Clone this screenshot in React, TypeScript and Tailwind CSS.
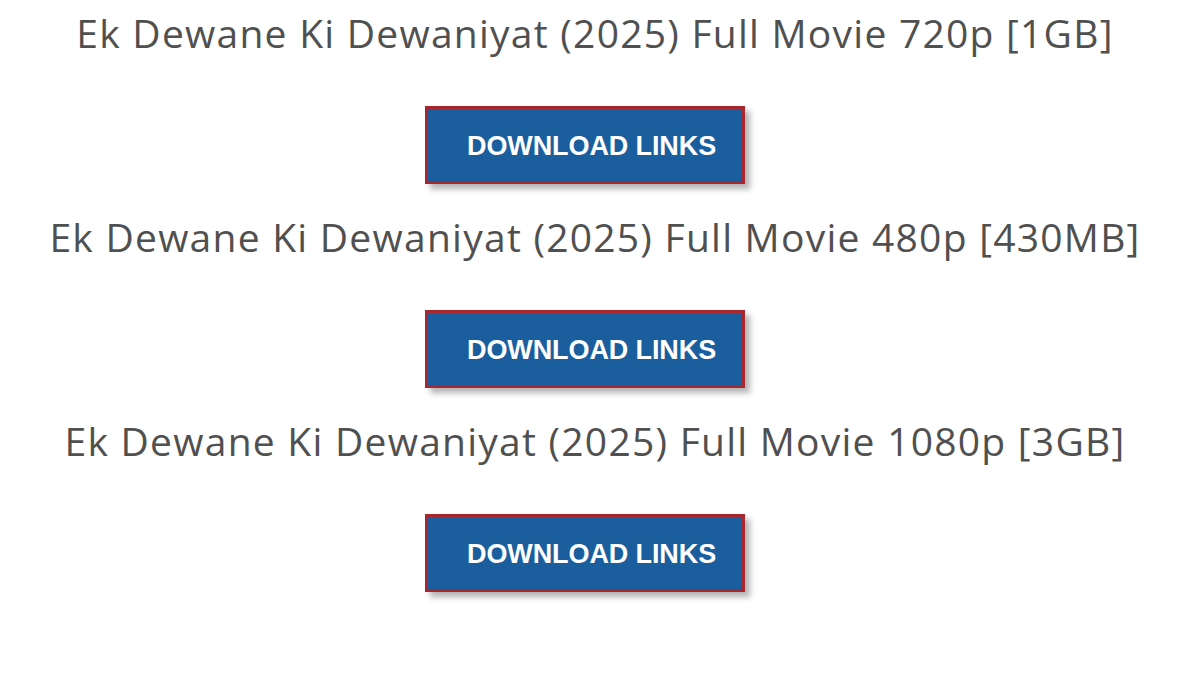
import React from 'react';

const qualities = [
  { label: 'Ek Dewane Ki Dewaniyat (2025) Full Movie 720p [1GB]' },
  { label: 'Ek Dewane Ki Dewaniyat (2025) Full Movie 480p [430MB]' },
  { label: 'Ek Dewane Ki Dewaniyat (2025) Full Movie 1080p [3GB]' },
];

const App: React.FC = () => {
  return (
    <div className="w-[1200px] h-[675px] bg-white overflow-hidden pt-[7px] flex flex-col items-center">
      {qualities.map((q) => (
        <div key={q.label} className="w-full flex flex-col items-center">
          {/* Heading */}
          <h2
            className="w-full pr-[10px] text-center text-[39px] leading-[52px] tracking-[1.25px] text-[#505050] font-normal"
            style={{ fontFamily: '"Open Sans", sans-serif' }}
          >
            {q.label}
          </h2>

          {/* Download button */}
          <a
            href="#"
            className="mt-[47px] mb-[27px] mr-[30px] w-[320px] h-[78px] flex items-center pl-[39px] pt-[3px] bg-[#1b5e9e] border-[3px] border-[#a8272e] shadow-[5px_5px_6px_rgba(0,0,0,0.3)] text-white font-bold text-[27px] tracking-[-0.1px]"
            style={{ fontFamily: '"Liberation Sans", Arial, sans-serif' }}
          >
            DOWNLOAD LINKS
          </a>
        </div>
      ))}
    </div>
  );
};

export default App;
